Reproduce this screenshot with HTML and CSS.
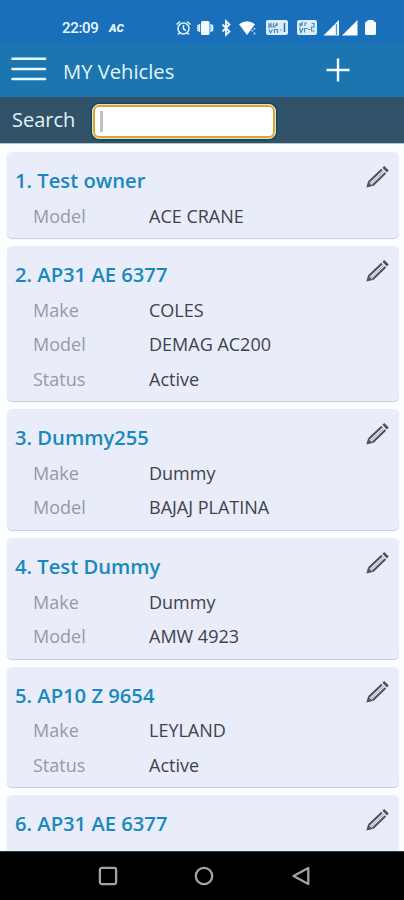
FILE: index.html
```html
<!DOCTYPE html>
<html lang="en">
<head>
<meta charset="utf-8">
<title>MY Vehicles</title>
<link rel="stylesheet" href="styles.css">
</head>
<body>
<svg class="defs" width="0" height="0"><defs>
<symbol id="pencil" viewBox="0 0 24 24"><g fill="none" stroke="#505158"><path d="M3.600 17.300L16.300 5.300M7.200 20.600L19.600 8.700" stroke-width="2"/><path d="M5.800 18.600L17.900 7.100" stroke-width=".8" stroke="#8b8d96"/><path d="M17.600 2.800L21.900 7.200" stroke-width="2.600"/></g><path d="M3 16.600L1.300 22.500L7.400 21Z" fill="#505158"/><path d="M4.800 17.500L4.200 19.600L6.300 19.100Z" fill="#a6a8b2"/></symbol>
</defs></svg>
<div class="phone">
<header class="status">
<span class="time">22:09</span><span class="carrier">AC</span>
<svg class="icons" width="204" height="20" viewBox="174 18 204 20">
<g fill="none" stroke="#e4f2fc" stroke-width="1.500"><circle cx="183.500" cy="28.500" r="5.500"/><path d="M183.500 25v4l2.500 1.500M176.500 24.500l3.500-3M190.500 24.500l-3.500-3M179.500 33l-1.500 1.500M187.500 33l1.500 1.500"/></g>
<rect x="201" y="21" width="8.500" height="14" rx="1.500" fill="#f3faff"/><path d="M199.500 24v8M211 24v8M197.500 25l1 1.500-1 1.500 1 1.500-1 1.500M213 25l-1 1.500 1 1.500-1 1.500 1 1.500" fill="none" stroke="#d9ecfa" stroke-width="1.400"/>
<path d="M222.500 24.500l7 7-3.500 3.300V21.200l3.500 3.300-7 7" fill="none" stroke="#eff8ff" stroke-width="1.800"/>
<path d="M239 24.200Q247 18.500 255 24.200L247 35Z" fill="#fff"/><path d="M252.500 30v1.500M254.500 28v1.500M254.500 32.500v2" stroke="#cfe5f5" stroke-width="1.500"/>
<rect x="266" y="20" width="22" height="15" rx="2" fill="#dcecf8"/><path d="M269 23v4l2-3v4M274 23l-1 4h2l2-4v3M269 29.500l1.500 3.500 2-3.500M274.500 33v-3.500h3v3.500M280 30h1.500" fill="none" stroke="#4b8bc2" stroke-width="1.200"/><path d="M284.500 23v9" stroke="#2872b3" stroke-width="1.500"/>
<rect x="297" y="20" width="20" height="15" rx="2" fill="#dcecf8"/><path d="M300 23v3l2-3v3M305 26v-3h2M299.500 28l1.500 4.500 2-4.500M304.500 32.500v-4h3M308 29.500h2M311.500 23.500h2.500v3.500h-2.500v4h3" fill="none" stroke="#4b8bc2" stroke-width="1.200"/>
<path d="M323.500 35.500L339 20v15.500Z" fill="#f5fbff"/><path d="M336.500 24v11" stroke="#5b96c9" stroke-width="1.300"/><path d="M342 35.500L357.500 20v15.500Z" fill="#fff"/>
<path d="M367.500 20h6v1.500h1q1.500 0 1.500 1.500v10.500q0 1.500-1.500 1.500h-8q-1.500 0-1.500-1.500V23q0-1.500 1.500-1.500h1Z" fill="#f5fbff"/>
</svg>
</header>
<div class="bar">
<svg class="menu" width="36" height="24" viewBox="0 0 36 24"><path d="M1.500 1.800h32.500M1.500 12h32.500M1.500 22h32.500" stroke="#e9f7fd" stroke-width="2.600" stroke-linecap="round"/></svg>
<h1>MY Vehicles</h1>
<svg class="plus" width="24" height="24" viewBox="0 0 24 24"><path d="M.5 12h23M12 .5v23" stroke="#f4fcff" stroke-width="2.400"/></svg>
</div>
<div class="search"><label>Search</label><div class="field"><span class="caret"></span></div></div>
<main>
<section class="card"><svg class="edit"><use href="#pencil"/></svg><h2>1. Test owner</h2><dl><dt>Model</dt><dd>ACE CRANE</dd></dl></section>
<section class="card"><svg class="edit"><use href="#pencil"/></svg><h2>2. AP31 AE 6377</h2><dl><dt>Make</dt><dd>COLES</dd><dt>Model</dt><dd>DEMAG AC200</dd><dt>Status</dt><dd>Active</dd></dl></section>
<section class="card"><svg class="edit"><use href="#pencil"/></svg><h2>3. Dummy255</h2><dl><dt>Make</dt><dd>Dummy</dd><dt>Model</dt><dd>BAJAJ PLATINA</dd></dl></section>
<section class="card"><svg class="edit"><use href="#pencil"/></svg><h2>4. Test Dummy</h2><dl><dt>Make</dt><dd>Dummy</dd><dt>Model</dt><dd>AMW 4923</dd></dl></section>
<section class="card"><svg class="edit"><use href="#pencil"/></svg><h2>5. AP10 Z 9654</h2><dl><dt>Make</dt><dd>LEYLAND</dd><dt>Status</dt><dd>Active</dd></dl></section>
<section class="card last"><svg class="edit"><use href="#pencil"/></svg><h2>6. AP31 AE 6377</h2></section>
</main>
<nav>
<svg width="20" height="20" viewBox="0 0 20 20"><rect x="1.900" y="1.900" width="16.200" height="16.200" rx="2" /></svg>
<svg width="20" height="20" viewBox="0 0 20 20"><circle cx="10" cy="10" r="8.200"/></svg>
<svg width="20" height="20" viewBox="0 0 20 20"><path d="M2.500 10L17.300 2v16Z"/></svg>
</nav>
</div>
</body>
</html>
```
FILE: styles.css
```css
* { box-sizing: border-box; }
body { margin: 0; font-family: "Open Sans", "Noto Sans", sans-serif; background: #fff; }
.defs { position: absolute; }
.phone { width: 404px; height: 900px; display: flex; flex-direction: column; overflow: hidden; }
.status { height: 43px; flex: none; background: #196fba; display: flex; align-items: center; padding: 13px 0 0 62px; color: #eaf6ff; }
.time { width: 47px; font: 500 15px/20px Roboto, sans-serif; letter-spacing: -.3px; white-space: nowrap; }
.carrier { width: 65px; font: italic 900 11.500px/18px Roboto, sans-serif; }
.icons { flex: none; }
.bar { height: 54px; flex: none; display: flex; align-items: center; padding: 0 54px 0 11px; color: #e3f4fc; background: linear-gradient(#1a72b5, #1b75af 8px); }
.menu { margin-top: -3px; }
h1 { margin: 2px auto 0 16px; font-size: 20.200px; font-weight: 400; line-height: 30px; white-space: nowrap; }
.plus { width: 24px; height: 24px; }
.search { height: 46px; flex: none; background: #30536a; display: flex; align-items: center; padding-left: 12px; color: #e4f1f6; font-size: 20px; }
.search label { width: 80px; margin-top: -1px; white-space: nowrap; }
.field { width: 184px; height: 35px; margin-top: 3px; background: #fff; border: 1px solid #e3e1cf; border-radius: 7px; box-shadow: inset 0 0 0 2px #dea42e, 0 0 0 1.500px #104762; padding: 6px 6px; }
.caret { display: block; width: 3px; height: 21px; background: #bcc3bf; margin-left: 1px; }
main { flex: 1; min-height: 0; overflow: hidden; padding: 8px 5px 0 7px; border-top: 1px solid #b9c6cf; background: #fdfeff; display: flex; flex-direction: column; gap: 8px; }
.card { flex: none; position: relative; background: #e8edf9; border-radius: 5px; padding: 10px 0 5px 8px; box-shadow: 0 1px 1px #c7cbd8; }
.last { height: 80px; }
h2 { margin: 0; font-size: 20.200px; font-weight: 600; line-height: 36.500px; color: #1b88bd; white-space: nowrap; }
dl { margin: 0; display: grid; grid-template-columns: 116px 1fr; padding-left: 18px; font-size: 18px; line-height: 34.600px; }
dt { color: #969aa4; }
dd { margin: 0; color: #3f424b; white-space: nowrap; }
.edit { position: absolute; right: 9px; top: 12px; width: 25px; height: 25px; }
nav { height: 49px; flex: none; background: #000; border-top: 1px solid #27403f; display: flex; align-items: center; justify-content: center; gap: 76.500px; padding-left: 4px; }
nav svg { fill: none; stroke: #a3a3a3; stroke-width: 2.300; stroke-linejoin: round; }
```
